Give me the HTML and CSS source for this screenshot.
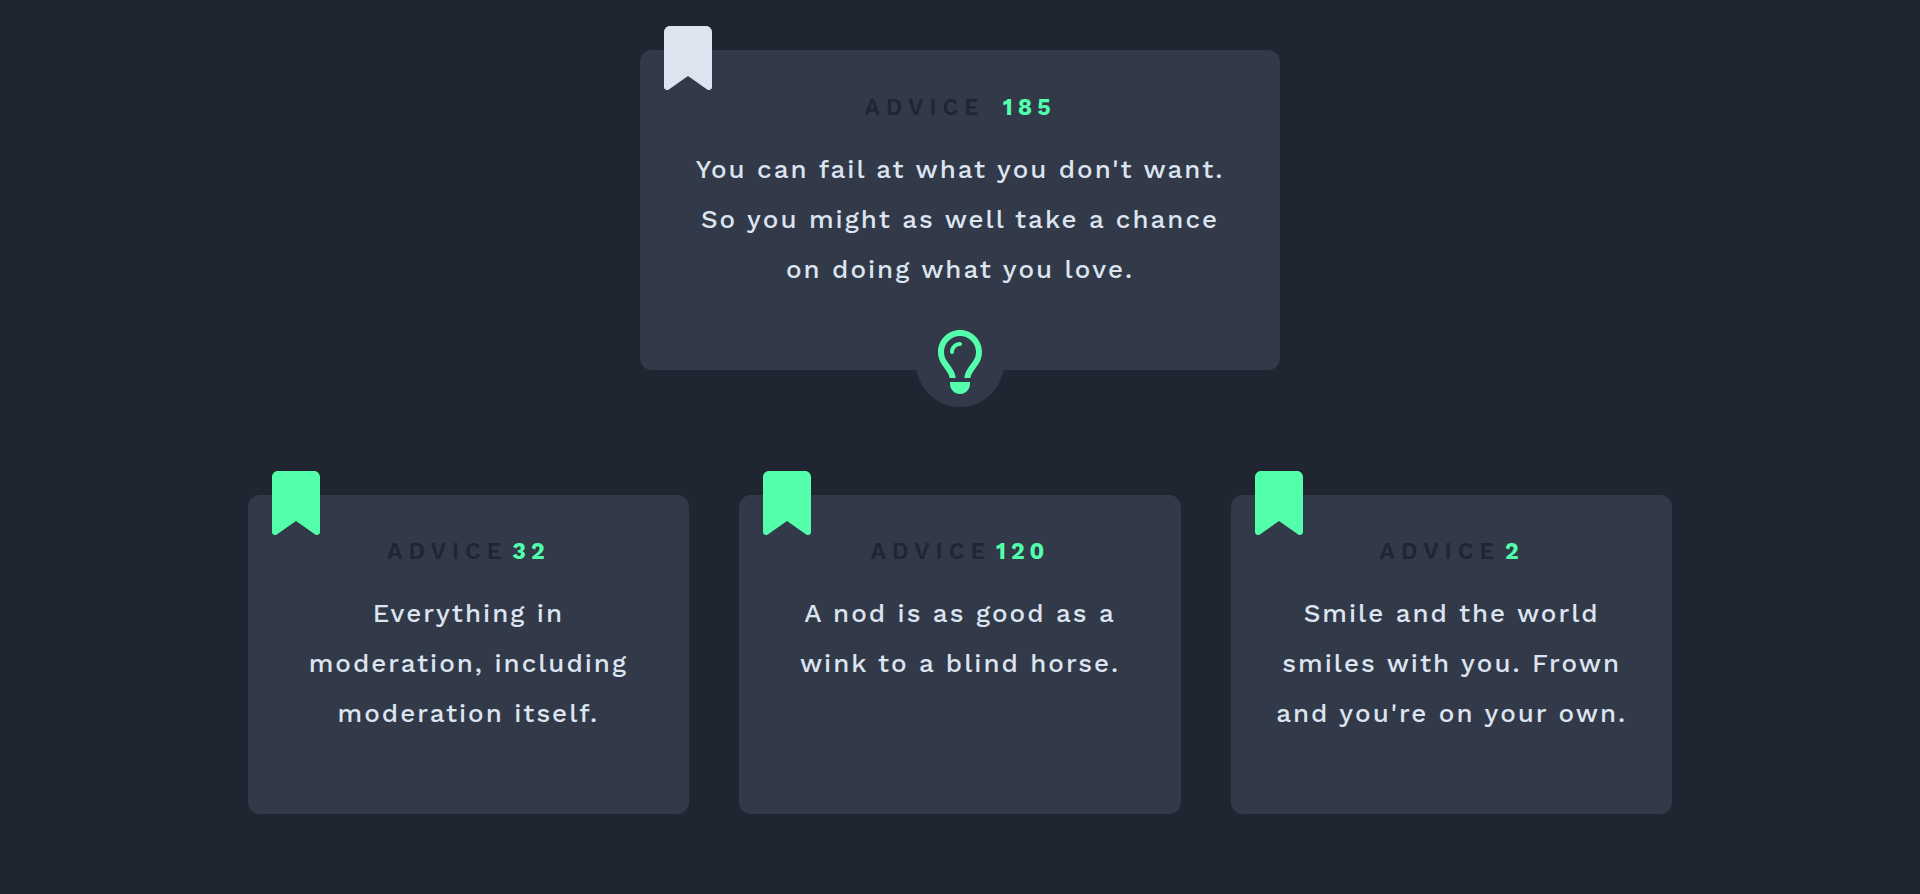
FILE: index.html
```html
<!DOCTYPE html>
<html lang="en">
<head>
  <meta charset="utf-8">
  <meta name="viewport" content="width=device-width, initial-scale=1">
  <title>Advice Generator</title>
  <link rel="stylesheet" href="styles.css">
</head>
<body>
  <svg class="sprite" aria-hidden="true">
    <symbol id="bookmark" viewBox="0 0 384 512">
      <path d="M0 48V487.7C0 501.1 10.9 512 24.3 512c5 0 9.9-1.5 14-4.4L192 400 345.7 507.6c4.1 2.9 9 4.4 14 4.4c13.4 0 24.3-10.9 24.3-24.3V48c0-26.5-21.5-48-48-48H48C21.5 0 0 21.5 0 48z"/>
    </symbol>
    <symbol id="lightbulb" viewBox="0 0 384 512">
      <path d="M297.2 248.9C311.6 228.3 320 203.2 320 176c0-70.7-57.3-128-128-128S64 105.3 64 176c0 27.2 8.4 52.3 22.8 72.9c3.7 5.3 8.1 11.3 12.8 17.7c12.9 17.7 28.3 38.9 39.8 59.8c10.4 19 15.7 38.8 18.3 57.5H109c-2.2-12-5.9-23.7-11.8-34.5c-9.9-18-22.2-34.9-34.5-51.8c-5.2-7.1-10.4-14.2-15.4-21.4C27.6 247.9 16 213.3 16 176C16 78.8 94.8 0 192 0s176 78.8 176 176c0 37.3-11.6 71.9-31.4 100.3c-5 7.2-10.2 14.3-15.4 21.4c-12.3 16.8-24.6 33.7-34.5 51.8c-5.9 10.8-9.6 22.5-11.8 34.5H226.4c2.6-18.7 7.9-38.6 18.3-57.5c11.5-20.9 26.9-42.1 39.8-59.8c4.7-6.4 9-12.4 12.7-17.7zM192 128c-26.5 0-48 21.5-48 48c0 8.8-7.2 16-16 16s-16-7.2-16-16c0-44.2 35.8-80 80-80c8.8 0 16 7.2 16 16s-7.2 16-16 16zm0 384c-44.2 0-80-35.8-80-80V416H272v16c0 44.2-35.8 80-80 80z"/>
    </symbol>
  </svg>

  <main class="page">
    <article class="card card-main">
      <button class="bookmark" type="button" aria-label="Save advice"><svg class="icon"><use href="#bookmark"/></svg></button>
      <h1 class="title"><span class="label">ADVICE</span><span class="number">185</span></h1>
      <p class="text">You can fail at what you don't want. So you might as well take a chance on doing what you love.</p>
      <button class="generate" type="button" aria-label="New advice"><svg class="icon"><use href="#lightbulb"/></svg></button>
    </article>

    <section class="saved" aria-label="Saved advice">
      <article class="card">
        <button class="bookmark bookmark-saved" type="button" aria-label="Remove advice 32"><svg class="icon"><use href="#bookmark"/></svg></button>
        <h2 class="title"><span class="label">ADVICE</span><span class="number">32</span></h2>
        <p class="text">Everything in moderation, including moderation itself.</p>
      </article>
      <article class="card">
        <button class="bookmark bookmark-saved" type="button" aria-label="Remove advice 120"><svg class="icon"><use href="#bookmark"/></svg></button>
        <h2 class="title"><span class="label">ADVICE</span><span class="number">120</span></h2>
        <p class="text">A nod is as good as a wink to a blind horse.</p>
      </article>
      <article class="card">
        <button class="bookmark bookmark-saved" type="button" aria-label="Remove advice 2"><svg class="icon"><use href="#bookmark"/></svg></button>
        <h2 class="title"><span class="label">ADVICE</span><span class="number">2</span></h2>
        <p class="text">Smile and the world smiles with you. Frown and you're on your own.</p>
      </article>
    </section>
  </main>
</body>
</html>
```

FILE: styles.css
```css
* {
  box-sizing: border-box;
}

body {
  margin: 0;
  background: #1f2631;
  color: #dce4f0;
  font-family: "Work Sans", Inter, sans-serif;
}

.sprite {
  display: none;
}

.page {
  display: flex;
  flex-direction: column;
  align-items: center;
  gap: 125px;
  padding: 50px 24px;
}

.card {
  position: relative;
  padding: 32px 40px 76px;
  border-radius: 12px;
  background: #323949;
  text-align: center;
}

.card-main {
  width: 100%;
  max-width: 640px;
  padding-top: 33px;
}

.saved {
  display: grid;
  grid-template-columns: repeat(auto-fit, minmax(400px, 1fr));
  gap: 50px;
  width: 100%;
  max-width: 1425px;
}

.title {
  display: flex;
  justify-content: center;
  gap: 5px;
  margin: 0 0 11px;
  font-size: 23px;
  line-height: 50px;
}

.card-main .title {
  gap: 18px;
}

.label {
  color: #1f2631;
  font-weight: 600;
  letter-spacing: 6px;
}

.number {
  color: #53ffaa;
  font-weight: 700;
  letter-spacing: 5px;
}

.text {
  margin: 0;
  font-size: 26px;
  font-weight: 500;
  line-height: 50px;
  letter-spacing: 2px;
}

.bookmark,
.generate {
  position: absolute;
  border: 0;
  cursor: pointer;
}

.bookmark {
  top: -24px;
  left: 24px;
  padding: 0;
  background: none;
  color: #dce4f0;
}

.bookmark-saved,
.generate {
  color: #53ffaa;
}

.generate {
  bottom: -37px;
  left: calc(50% - 44px);
  width: 88px;
  height: 88px;
  padding: 11px 12px 13px;
  border-radius: 50%;
  background: #323949;
}

.icon {
  display: block;
  width: 48px;
  height: 64px;
  margin: 0 auto;
  fill: currentColor;
}
```
